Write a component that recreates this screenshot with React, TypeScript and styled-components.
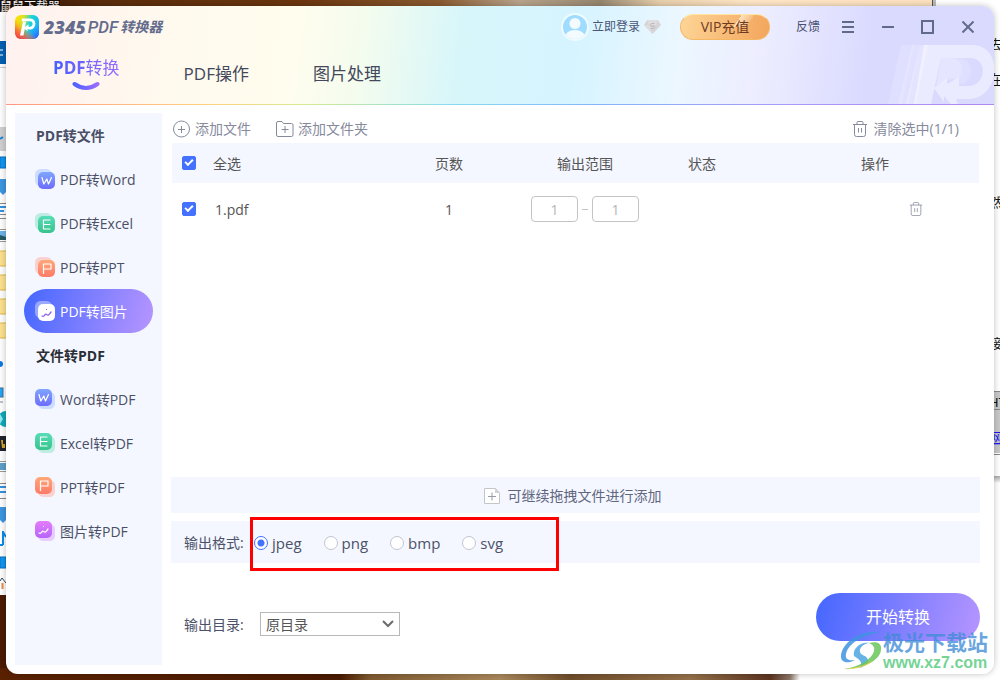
import React from "react";
import styled, { createGlobalStyle, css } from "styled-components";

const GlobalStyle = createGlobalStyle`
  *, *::before, *::after { box-sizing: border-box; }
  body {
    margin: 0;
    font-family: "Open Sans", "Noto Sans CJK SC", sans-serif;
    font-size: 14px;
    line-height: 20px;
    color: #4c5268;
  }
  button, input, select { font: inherit; color: inherit; margin: 0; padding: 0; }
  button { border: 0; background: none; cursor: pointer; }
  h2, p { margin: 0; font-size: inherit; }
`;

/* ---------- desktop behind the window ---------- */

const Desktop = styled.div`
  position: relative;
  min-height: 100vh;
  padding: 6px;
  display: flex;
  overflow: hidden;
  background:
    linear-gradient(90deg, #2c1405 0%, #5a2c0c 10%, #6b360f 30%, #8a5a30 44%, #b8a48c 52%, #96866f 60%, #e8cfac 66%, #ffe6c6 75%, #fbe0bd 100%) top / 100% 12px no-repeat,
    linear-gradient(90deg, #5a2100 0%, #4a1b00 34%, #7f5a30 37%, #a8875a 50%, #6f4d2b 57%, #94704a 69%, #5c3420 77%, #8a7668 79%, #ffffff 80%) bottom / 100% 12px no-repeat,
    #4a1b00;
`;

const LeftEdge = styled.svg`
  position: absolute;
  left: 0;
  top: 0;
`;

const RightEdge = styled.svg`
  position: absolute;
  right: 0;
  top: 0;
`;

function DesktopLeft() {
  return (
    <LeftEdge width="100" height="680" aria-hidden="true">
      <rect x="0" y="12" width="8" height="583" fill="#fdfdfd" />
      <rect x="0" y="0" width="60" height="7" fill="#1c1008" />
      <text x="0" y="11" fontSize="12" fill="#fff" fontFamily="Noto Sans CJK SC">鼠鼠下载器</text>
      <rect x="0" y="41" width="6" height="23" fill="#0560b0" />
      <path d="M0 50h3M0 55h3" stroke="#fff" />
      <path d="M0 67.500h6" stroke="#ccc" />
      <rect x="0" y="127" width="6" height="24" fill="#cfcfcf" />
      <path d="M0 139l3-2" stroke="#1583d8" strokeWidth="2" />
      <rect x="0" y="157" width="6" height="11" fill="#1296f0" stroke="#0870bd" />
      <path d="M0 179h6v13l-3 3-3-3z" fill="#3d96df" />
      <path d="M0 203.500h6M0 214.500h6M0 218.500h6" stroke="#888" />
      <path d="M0 207h6M0 211h4" stroke="#3292e0" strokeWidth="2" />
      <path d="M0 229.500h6M0 241.500h6" stroke="#999" />
      <rect x="0" y="231" width="6" height="8" fill="#6db2e8" />
      <path d="M0 235l6 2v3h-6z" fill="#275b62" />
      {[251, 275, 299, 323].map((y) => (
        <rect key={y} x="-1" y={y} width="9" height="15" fill="#fbe08f" stroke="#dcb54a" />
      ))}
      <circle cx="0" cy="364" r="3" fill="#0a78e0" />
      <rect x="-3" y="388" width="6" height="9" fill="#25a3f5" stroke="#3a6d91" />
      <path d="M0 402h3" stroke="#789" />
      <circle cx="6" cy="419" r="8" fill="#13a7b8" />
      <path d="M0 414l3 5-3 5z" fill="#8fe8ee" />
      <rect x="0" y="436" width="6" height="15" fill="#20222d" />
      <path d="M1 440h2v4h2v4h-3z" fill="#d0a328" />
      <path d="M0 461.500h6M0 471.500h6" stroke="#999" />
      <rect x="0" y="463" width="6" height="7" fill="#5c9fc8" />
      <path d="M0 483.500h6M0 498.500h6" stroke="#888" />
      <path d="M0 487h6M0 492h6" stroke="#3292e0" strokeWidth="2" />
      <path d="M0 507h6v13l-3 3-3-3z" fill="#3d96df" />
      <path d="M3 531v14M3 532l3 5M0 545h3" stroke="#0a8bea" strokeWidth="2" />
      <rect x="0" y="557" width="6" height="11" fill="#1296f0" stroke="#0870bd" />
      <path d="M0 581l2-3 4 5" stroke="#345" fill="none" />
      <path d="M2.500 583v6" stroke="#e78b45" strokeWidth="2" />
    </LeftEdge>
  );
}

function DesktopRight() {
  return (
    <RightEdge width="70" height="680" aria-hidden="true">
      <defs>
        <linearGradient id="sill" x1="0" y1="0" x2="0" y2="1">
          <stop offset="0" stopColor="#a8a8a8" />
          <stop offset="1" stopColor="#fff" />
        </linearGradient>
      </defs>
      <rect x="0" y="0" width="70" height="680" fill="#fff" />
      <rect x="0" y="0" width="2" height="6" fill="#fbe0bd" />
      <path d="M2.500 0v6" stroke="#555" />
      <path d="M4.500 0v6" stroke="#bbb" strokeWidth="3" />
      <rect x="60" y="391" width="10" height="62" fill="#c8c8c8" />
      <path d="M60 391.500h10M60 409.500h10M60 454.500h10" stroke="#888" />
      <g fontSize="13" fill="#111" fontFamily="Noto Sans CJK SC">
        <text x="59" y="49">去</text>
        <text x="59" y="84">在</text>
        <text x="59" y="207">然</text>
        <text x="59" y="348">接</text>
        <text x="59" y="407" fontFamily="Liberation Sans">HT</text>
        <text x="59" y="442" fill="#1b1bf0" textDecoration="underline">网</text>
      </g>
      <rect x="60" y="476" width="10" height="7" fill="url(#sill)" />
    </RightEdge>
  );
}

/* ---------- window ---------- */

const WindowFrame = styled.div`
  position: relative;
  flex: 1;
  display: flex;
  min-width: 0;
  border-radius: 12px;
  box-shadow: 0 0 6px rgba(0, 0, 0, 0.25);
`;

const Window = styled.div`
  position: relative;
  flex: 1;
  display: flex;
  flex-direction: column;
  min-width: 0;
  border-radius: 12px;
  overflow: hidden;
  background: #fff;
`;

const Header = styled.header`
  position: relative;
  background: linear-gradient(97deg, #fff1ef 0%, #fff8ee 14%, #fffdee 29%, #f4fcee 36%, #d7f6fa 46%, #d5f4ff 57%, #ecf7ff 68%, #ededff 76%, #dadaff 87%, #dadaff 100%);
  &::after {
    content: "";
    display: block;
    height: 1px;
    background: linear-gradient(90deg, #ff9884, #ffd080 20%, #d8ea90 30%, #86dcf0 45%, #86b4fa 60%, #a898f8 80%, #b088f0);
  }
`;

const HeaderMark = styled.svg`
  position: absolute;
  right: 0;
  bottom: 1px;
`;

const TitleBar = styled.div`
  position: relative;
  display: flex;
  align-items: center;
  height: 42px;
  padding: 0 6px 0 9px;
`;

const Brand = styled.div`
  display: flex;
  align-items: center;
  gap: 5px;
  margin-right: auto;
`;

const BrandName = styled.span`
  display: flex;
  align-items: center;
  gap: 2px;
  color: #636c8c;
  font-style: italic;
  font-weight: 800;
  font-size: 18px;
`;

const BrandLight = styled.span`
  font-family: "Roboto", sans-serif;
  font-weight: 500;
  font-size: 17px;
`;

const BrandHan = styled.span`
  font-weight: 700;
  font-size: 14px;
`;

const LoginButton = styled.button`
  display: flex;
  align-items: center;
  gap: 3px;
  margin-right: 18px;
  font-size: 12px;
  color: #4a5578;
`;

const VipButton = styled.button`
  width: 90px;
  height: 26px;
  margin-right: 26px;
  border-radius: 13px;
  border: 1px solid #f6b765;
  border-top-color: #ffe5a0;
  background: linear-gradient(125deg, transparent 63%, #fde3c0 63%, #f6bd80 76%, transparent 76%) 0 0 / 100% 50% no-repeat,
    linear-gradient(100deg, #fdd596, #f3a55c);
  color: #6f3a22;
`;

const FeedbackButton = styled.button`
  margin-right: 8px;
  font-size: 12px;
  color: #4a5070;
`;

const WindowButton = styled.button`
  display: flex;
  align-items: center;
  justify-content: center;
  width: 40px;
  height: 28px;
  color: #626a8a;
`;

const Tabs = styled.nav`
  position: relative;
  display: flex;
  align-items: center;
  gap: 64px;
  height: 56px;
  padding: 0 47px 5px;
`;

const Tab = styled.button<{ $active?: boolean }>`
  display: flex;
  flex-direction: column;
  align-items: center;
  gap: 2px;
  font-size: 17px;
  line-height: 22px;
  color: #43485c;
  ${(p) =>
    p.$active &&
    css`
      color: #5b5cff;
      font-weight: 700;
    `}
`;

const TabText = styled.span`
  background: linear-gradient(90deg, #4560ff, #9a6cff);
  background-clip: text;
  color: transparent;
`;

const TabHan = styled.span`
  font-weight: 400;
`;

/* ---------- body ---------- */

const Body = styled.div`
  flex: 1;
  display: flex;
  gap: 9px;
  padding: 8px 14px 9px 9px;
`;

const Sidebar = styled.aside`
  flex: none;
  width: 147px;
  padding: 0 9px;
  background: #f4f7ff;
`;

const GroupTitle = styled.h2<{ $dark?: boolean }>`
  height: 44px;
  padding: 1px 0 0 12px;
  line-height: 44px;
  font-weight: 700;
  color: ${(p) => (p.$dark ? "#2c2e36" : "#4a4f66")};
`;

const NavItem = styled.button<{ $active?: boolean }>`
  display: flex;
  align-items: center;
  gap: 5px;
  width: 100%;
  height: 44px;
  padding-left: 11px;
  border-radius: 22px;
  white-space: nowrap;
  color: ${(p) => (p.$active ? "#fff" : "#4a4f66")};
  background: ${(p) => (p.$active ? "linear-gradient(105deg, #4a69ff 5%, #b193ff 95%)" : "none")};
`;

const NavLabel = styled.span`
  padding-top: 2px;
`;

const Main = styled.main`
  flex: 1;
  min-width: 0;
  display: flex;
  flex-direction: column;
`;

const Toolbar = styled.div`
  display: flex;
  align-items: center;
  gap: 25px;
  height: 30px;
  padding: 2px 21px 0 1px;
`;

const ToolButton = styled.button<{ $end?: boolean }>`
  display: flex;
  align-items: center;
  gap: ${(p) => (p.$end ? 6 : 4)}px;
  margin-left: ${(p) => (p.$end ? "auto" : "0")};
  color: #868a9c;
`;

const TableArea = styled.div`
  flex: 1;
  padding: 0 1px;
`;

const FileTable = styled.table`
  width: 100%;
  table-layout: fixed;
  border-collapse: collapse;
  color: #555;
`;

const Col = styled.col<{ $w?: number }>`
  width: ${(p) => (p.$w ? `${p.$w}px` : "auto")};
`;

const HeadRow = styled.tr`
  height: 40px;
  background: #f4f7ff;
`;

const FileRow = styled.tr`
  height: 52px;
`;

const cell = css<{ $center?: boolean; $pad?: number; $text?: boolean }>`
  padding: ${(p) => (p.$text ? 2 : 0)}px 0 0 ${(p) => p.$pad ?? 0}px;
  font-weight: 400;
  text-align: ${(p) => (p.$center ? "center" : "left")};
`;
const Th = styled.th`${cell}`;
const Td = styled.td`${cell}`;

const Checkbox = styled.input.attrs({ type: "checkbox" })`
  appearance: none;
  display: block;
  width: 14px;
  height: 14px;
  border-radius: 2px;
  border: 1px solid #c8ccd8;
  &:checked {
    border-color: #4472ff;
    background: #4472ff;
  }
  &:checked::after {
    content: "";
    display: block;
    width: 8px;
    height: 5px;
    margin: 2px;
    border: solid #fff;
    border-width: 0 0 2px 2px;
    transform: rotate(-45deg);
  }
`;

const Range = styled.div`
  display: flex;
  align-items: center;
  justify-content: center;
  height: 26px;
`;

const PageInput = styled.input`
  width: 47px;
  height: 26px;
  border: 1px solid #c4c4c4;
  border-radius: 4px;
  background: #fff;
  text-align: center;
  color: #b4b4b4;
`;

const Dash = styled.span`
  width: 6px;
  height: 1px;
  margin: 0 4px;
  background: #c4c4c4;
`;

const DeleteButton = styled.button`
  display: block;
  height: 16px;
  color: #9296a8;
`;

const DropBar = styled.div`
  display: flex;
  align-items: center;
  justify-content: center;
  gap: 8px;
  height: 36px;
  padding: 1px 6px 0 0;
  background: #f4f7ff;
  color: #60667e;
`;

const FormatBar = styled.div`
  position: relative;
  display: flex;
  align-items: center;
  height: 42px;
  margin-top: 8px;
  padding: 2px 0 0 13px;
  background: #f4f7ff;
`;

const FieldLabel = styled.span`
  width: 70px;
  flex: none;
`;

const RadioGroup = styled.div`
  display: flex;
  gap: 22px;
`;

const RadioLabel = styled.label`
  display: flex;
  align-items: center;
  gap: 4px;
  font-size: 15px;
`;

const Radio = styled.input.attrs({ type: "radio" })`
  appearance: none;
  width: 14px;
  height: 14px;
  border: 1px solid #c2c5cd;
  border-radius: 50%;
  background: #fff;
  &:checked {
    border-color: #4472ff;
    background: radial-gradient(circle, #4472ff 3px, #fff 4px);
  }
`;

const Highlight = styled.div`
  position: absolute;
  left: 79px;
  top: -4px;
  width: 309px;
  height: 54px;
  border: 3px solid #f00;
  pointer-events: none;
`;

const Footer = styled.div`
  display: flex;
  align-items: flex-end;
  justify-content: space-between;
  margin: 30px 0 24px;
  padding-left: 13px;
`;

const FolderField = styled.label`
  display: flex;
  align-items: center;
  padding-bottom: 5px;
`;

const FolderLabel = styled.span`
  width: 76px;
  padding-top: 2px;
`;

const SelectWrap = styled.span`
  display: grid;
  align-items: center;
  justify-items: end;
  width: 140px;
  & > * { grid-area: 1 / 1; }
  & > svg { margin-right: 6px; pointer-events: none; }
`;

const Select = styled.select`
  appearance: none;
  width: 100%;
  height: 24px;
  padding: 1px 5px 0;
  border: 1px solid #b8b8b8;
  border-radius: 0;
  background: #fff;
  color: #555;
`;

const StartButton = styled.button`
  width: 164px;
  height: 48px;
  border-radius: 24px;
  background: linear-gradient(105deg, #4a69ff 5%, #b193ff 95%);
  color: #fff;
  font-size: 16px;
`;

const SiteMark = styled.div`
  position: absolute;
  right: 6px;
  bottom: 2px;
  display: flex;
  gap: 1px;
  pointer-events: none;
`;

const SiteText = styled.div`
  display: flex;
  flex-direction: column;
  font-weight: 700;
`;

const SiteName = styled.span`
  font-size: 21px;
  line-height: 24px;
  color: rgba(64, 140, 214, 0.78);
`;

const SiteUrl = styled.span`
  font-family: "Liberation Sans", sans-serif;
  font-size: 16px;
  line-height: 18px;
  color: rgba(78, 200, 120, 0.8);
`;

/* ---------- icons ---------- */

type Kind = "word" | "excel" | "ppt" | "image" | "imageActive";

const picture = "M4 12c3 1.500 2.500-3 4.500-1.500s2 .5 4.500-2.500M8.500 5.500h.01";

const kinds: Record<Kind, { from: string; to: string; ghost: string; ink: string; glyph: string }> = {
  word: { from: "#7fa5ff", to: "#6d6dfb", ghost: "#94b6ff", ink: "#fff", glyph: "M4 5.500l1.800 6.500 3-5 1.700 5L13.500 5.500" },
  excel: { from: "#57dcb8", to: "#36c48b", ghost: "#6fdcb8", ink: "#fff", glyph: "M12 4H5.500v9H12M5.500 8.500H12" },
  ppt: { from: "#ffa878", to: "#ff7a68", ghost: "#ff9c8a", ink: "#fff", glyph: "M5.500 13.500V4H13V9H5.500" },
  image: { from: "#e57dfb", to: "#b565fb", ghost: "#d58dfb", ink: "#fff", glyph: picture },
  imageActive: { from: "#ffffff", to: "#ffffff", ghost: "#ffffff", ink: "#8a5bea", glyph: picture },
};

function FileIcon({ kind, reverse }: { kind: Kind; reverse?: boolean }) {
  const k = kinds[kind];
  const id = `${kind}-${reverse ? "r" : "f"}`;
  const shift = reverse ? 0 : 3;
  return (
    <svg width="20" height="20" viewBox="0 0 20 20" fill="none" aria-hidden="true">
      <defs>
        <linearGradient id={id} x1="0" y1="0" x2="0" y2="1">
          <stop stopColor={k.from} />
          <stop offset="1" stopColor={k.to} />
        </linearGradient>
      </defs>
      <rect x={3 - shift} y={3 - shift} width="17" height="17" rx="5.500" fill={k.ghost} opacity=".4" />
      <g transform={`translate(${shift} ${shift})`}>
        <rect width="17" height="17" rx="5" fill={`url(#${id})`} />
        <path d={k.glyph} stroke={k.ink} strokeWidth="1.200" strokeLinecap="round" strokeLinejoin="round" />
      </g>
    </svg>
  );
}

function AppLogo() {
  return (
    <svg width="24" height="24" viewBox="0 0 24 24" aria-hidden="true">
      <defs>
        <linearGradient id="lg1" x1="0" y1=".3" x2="1" y2=".6">
          <stop stopColor="#ffe000" />
          <stop offset=".28" stopColor="#d8e02a" />
          <stop offset=".55" stopColor="#1fd6d0" />
          <stop offset="1" stopColor="#12b5ff" />
        </linearGradient>
        <linearGradient id="lg2" x1="0" y1="1" x2=".45" y2=".5">
          <stop stopColor="#ff1f4c" />
          <stop offset=".5" stopColor="#ff5a3c" stopOpacity=".8" />
          <stop offset="1" stopColor="#ffb000" stopOpacity="0" />
        </linearGradient>
        <linearGradient id="lg3" x1=".8" y1="1" x2=".5" y2=".5">
          <stop stopColor="#2a62ff" />
          <stop offset="1" stopColor="#1ab8ff" stopOpacity="0" />
        </linearGradient>
      </defs>
      <rect width="24" height="24" rx="6" fill="url(#lg1)" />
      <rect width="24" height="24" rx="6" fill="url(#lg3)" />
      <rect width="24" height="24" rx="6" fill="url(#lg2)" />
      <path d="M5 20.500L8 6.500H11L8.500 20.500z" fill="#fff" />
      <path d="M7 3.500h8.500c6.500 0 6.500 10.500 0 11H12l1.200 2L8.500 13.200l5-4v2.500H15c3.500 0 3.500-5.400 0-5.400H6.500z" fill="#fff" />
    </svg>
  );
}

function Avatar() {
  return (
    <svg width="28" height="28" viewBox="0 0 28 28" aria-hidden="true">
      <defs>
        <clipPath id="face"><circle cx="14" cy="14" r="12" /></clipPath>
      </defs>
      <circle cx="14" cy="14" r="13" fill="#a0dcff" stroke="#effbff" strokeWidth="2" />
      <g fill="#f3fbff" clipPath="url(#face)">
        <circle cx="14" cy="10.500" r="5.500" />
        <ellipse cx="14" cy="24" rx="10" ry="7" />
      </g>
    </svg>
  );
}

function Diamond() {
  return (
    <svg width="19" height="14" viewBox="0 0 19 14" fill="none" aria-hidden="true">
      <path d="M4 0h11l3 5-8.500 9L1 5z" fill="#d6d4d6" />
      <path d="M4 0h11l-2 5H6zM1 5h5l3.500 9z" fill="#dfdddf" />
      <path d="M11.500 3.500h-2.500c-2 0-2 2.500 0 2.500h1c2 0 2 2.500 0 2.500H7.500" stroke="#bdb9bb" />
    </svg>
  );
}

function Trash({ size }: { size: number }) {
  return (
    <svg width={size} height={size} viewBox="0 0 16 16" fill="none" stroke="currentColor" aria-hidden="true">
      <path d="M1 3.500h14M5 3.500V1.500Q5 .5 6 .5h4q1 0 1 1v2M2.500 3.500v10q0 2 2 2h7q2 0 2-2v-10M6.500 7v4.500M9.500 7v4.500" />
    </svg>
  );
}

function BackdropLetter() {
  return (
    <HeaderMark width="110" height="60" viewBox="0 0 110 60" aria-hidden="true">
      <g fill="#fff">
        <path d="M17 1H30L18 60H4z" opacity=".14" />
        <path d="M28 1H36L24 60H14z" opacity=".2" />
        <path d="M36 1H44L32 60H22z" opacity=".28" />
        <path
          d="M40 1H88C102 1 110 11 110 24V30C108 45 98 55 84 55H72L74 60H67L60 52V58L50 44L63 34V40L75 33V42H84C103 42 104 14 86 14H57L47 60H30z"
          opacity=".45"
        />
        <path d="M57 14H66C82 14 82 36 70 35L63 34L52 42z" opacity=".2" />
        <path d="M57 14H74C92 14 91 40 75 40V33L52 42z" opacity=".14" />
      </g>
    </HeaderMark>
  );
}

/* ---------- page ---------- */

const toFile: { kind: Kind; label: string; active?: boolean }[] = [
  { kind: "word", label: "PDF转Word" },
  { kind: "excel", label: "PDF转Excel" },
  { kind: "ppt", label: "PDF转PPT" },
  { kind: "imageActive", label: "PDF转图片", active: true },
];

const toPdf: { kind: Kind; label: string }[] = [
  { kind: "word", label: "Word转PDF" },
  { kind: "excel", label: "Excel转PDF" },
  { kind: "ppt", label: "PPT转PDF" },
  { kind: "image", label: "图片转PDF" },
];

export default function App() {
  return (
    <>
      <GlobalStyle />
      <Desktop>
        <DesktopLeft />
        <DesktopRight />
        <WindowFrame>
          <Window>
            <Header>
              <BackdropLetter />
              <TitleBar>
                <Brand>
                  <AppLogo />
                  <BrandName>
                    <span>2345</span>
                    <BrandLight>PDF</BrandLight>
                    <BrandHan>转换器</BrandHan>
                  </BrandName>
                </Brand>
                <LoginButton>
                  <Avatar />
                  <span>立即登录</span>
                  <Diamond />
                </LoginButton>
                <VipButton>VIP充值</VipButton>
                <FeedbackButton>反馈</FeedbackButton>
                <WindowButton aria-label="菜单">
                  <svg width="12" height="12" stroke="currentColor" strokeWidth="2"><path d="M0 1h12M0 6h12M0 11h12" /></svg>
                </WindowButton>
                <WindowButton aria-label="最小化">
                  <svg width="12" height="12" stroke="currentColor" strokeWidth="2"><path d="M0 6h12" /></svg>
                </WindowButton>
                <WindowButton aria-label="最大化">
                  <svg width="14" height="14" fill="none" stroke="currentColor" strokeWidth="2"><path d="M1 1h11v12H1z" /></svg>
                </WindowButton>
                <WindowButton aria-label="关闭">
                  <svg width="12" height="12" stroke="currentColor" strokeWidth="2"><path d="M0.500 0.500l11 11M11.500 0.500l-11 11" /></svg>
                </WindowButton>
              </TitleBar>
              <Tabs>
                <Tab $active>
                  <TabText>PDF<TabHan>转换</TabHan></TabText>
                  <svg width="28" height="10" fill="none" aria-hidden="true">
                    <defs>
                      <linearGradient id="smile"><stop stopColor="#4d62ff" /><stop offset="1" stopColor="#9a6cff" /></linearGradient>
                    </defs>
                    <path d="M2.500 3Q14 11 25.500 3" stroke="url(#smile)" strokeWidth="4" strokeLinecap="round" />
                  </svg>
                </Tab>
                <Tab>PDF操作</Tab>
                <Tab>图片处理</Tab>
              </Tabs>
            </Header>

            <Body>
              <Sidebar>
                <GroupTitle>PDF转文件</GroupTitle>
                {toFile.map((i) => (
                  <NavItem key={i.label} $active={i.active}>
                    <FileIcon kind={i.kind} />
                    <NavLabel>{i.label}</NavLabel>
                  </NavItem>
                ))}
                <GroupTitle $dark>文件转PDF</GroupTitle>
                {toPdf.map((i) => (
                  <NavItem key={i.label}>
                    <FileIcon kind={i.kind} reverse />
                    <NavLabel>{i.label}</NavLabel>
                  </NavItem>
                ))}
              </Sidebar>

              <Main>
                <Toolbar>
                  <ToolButton>
                    <svg width="19" height="18" viewBox="0 0 19 18" fill="none" stroke="currentColor" aria-hidden="true">
                      <circle cx="9.500" cy="9" r="8" /><path d="M6 9.500h7M9.500 6v7" />
                    </svg>
                    添加文件
                  </ToolButton>
                  <ToolButton>
                    <svg width="18" height="16" viewBox="0 0 18 16" fill="none" stroke="currentColor" aria-hidden="true">
                      <path d="M.5 14V2Q.5 .5 2 .5h4l1.500 2h8Q17 2.500 17 4v10q0 1.500-1.500 1.500H2Q.5 15.500 .5 14zM5.500 8.500h7M9 5v7" />
                    </svg>
                    添加文件夹
                  </ToolButton>
                  <ToolButton $end>
                    <Trash size={16} />
                    清除选中(1/1)
                  </ToolButton>
                </Toolbar>

                <TableArea>
                  <FileTable>
                    <colgroup>
                      <Col $w={41} />
                      <Col />
                      <Col $w={130} />
                      <Col $w={142} />
                      <Col $w={92} />
                      <Col $w={231} />
                    </colgroup>
                    <thead>
                      <HeadRow>
                        <Th $pad={10}><Checkbox defaultChecked aria-label="全选" /></Th>
                        <Th $text>全选</Th>
                        <Th $text $center>页数</Th>
                        <Th $text $center>输出范围</Th>
                        <Th $text $center>状态</Th>
                        <Th $text $pad={113}>操作</Th>
                      </HeadRow>
                    </thead>
                    <tbody>
                      <FileRow>
                        <Td $pad={10}><Checkbox defaultChecked aria-label="1.pdf" /></Td>
                        <Td $text $pad={2}>1.pdf</Td>
                        <Td $text $center>1</Td>
                        <Td>
                          <Range>
                            <PageInput defaultValue="1" aria-label="起始页" />
                            <Dash />
                            <PageInput defaultValue="1" aria-label="结束页" />
                          </Range>
                        </Td>
                        <Td />
                        <Td $pad={161}>
                          <DeleteButton aria-label="删除"><Trash size={14} /></DeleteButton>
                        </Td>
                      </FileRow>
                    </tbody>
                  </FileTable>
                </TableArea>

                <DropBar>
                  <svg width="16" height="16" fill="none" stroke="#c4c6ca" aria-hidden="true">
                    <path d="M.5 .5h11l4 4v11H.5z" fill="#fff" /><path d="M11 0l5 5h-5z" fill="#d0d2d6" stroke="none" />
                    <path d="M4 8.500h8M8 4.500v8" stroke="#989ca6" />
                  </svg>
                  <p>可继续拖拽文件进行添加</p>
                </DropBar>

                <FormatBar role="radiogroup" aria-label="输出格式">
                  <FieldLabel>输出格式:</FieldLabel>
                  <RadioGroup>
                    {["jpeg", "png", "bmp", "svg"].map((f, i) => (
                      <RadioLabel key={f}>
                        <Radio name="format" value={f} defaultChecked={i === 0} />
                        {f}
                      </RadioLabel>
                    ))}
                  </RadioGroup>
                  <Highlight />
                </FormatBar>

                <Footer>
                  <FolderField>
                    <FolderLabel>输出目录:</FolderLabel>
                    <SelectWrap>
                      <Select defaultValue="src"><option value="src">原目录</option></Select>
                      <svg width="12" height="8" fill="none" stroke="#6c6c6c" strokeWidth="2" aria-hidden="true"><path d="M1 1l5 5 5-5" /></svg>
                    </SelectWrap>
                  </FolderField>
                  <StartButton>开始转换</StartButton>
                </Footer>
              </Main>
            </Body>

            <SiteMark>
              <svg width="42" height="42" viewBox="0 0 42 42" fill="none" aria-hidden="true">
                <path d="M40 2C20 0 3 12 1 25c-1 8 7 9 14 5-7 1-10-1-9-6C8 14 22 5 40 2z" fill="#3d94e0" opacity=".85" />
                <path d="M14 26c-2-8 8-15 15-13-7 1-10 6-9 9 1 4 7 3 8 8 1 4-5 7-9 8 5-5 1-8-5-12z" fill="#4ba6e2" opacity=".85" />
                <path d="M29 13c8-2 13 0 12 7-1 10-17 19-37 19 15-2 28-10 30-18 1-4-1-6-5-8z" fill="#69c65a" opacity=".85" />
                <path d="M4 39c12 1 24-3 30-9-5 3-15 8-30 9z" fill="#e8cf45" opacity=".8" />
              </svg>
              <SiteText>
                <SiteName>极光下载站</SiteName>
                <SiteUrl>www.xz7.com</SiteUrl>
              </SiteText>
            </SiteMark>
          </Window>
        </WindowFrame>
      </Desktop>
    </>
  );
}
